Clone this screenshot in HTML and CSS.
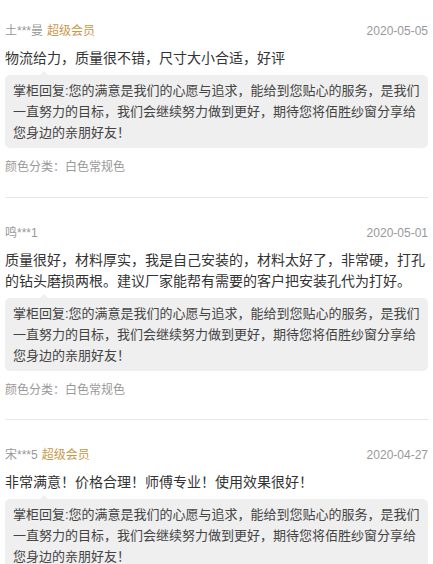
FILE: index.html
```html
<!DOCTYPE html>
<html lang="zh-CN">
  <head>
    <meta charset="UTF-8" />
    <meta name="viewport" content="width=device-width, initial-scale=1.0" />
    <title>商品评价</title>
    <link rel="stylesheet" href="styles.css">
  </head>
  <body>
    <div class="pingjia-lista">
      <div class="item">
        <div class="topo">
          <span class="nome">土***曼</span>
          <span class="vip">超级会员</span>
          <span class="data">2020-05-05</span>
        </div>
        <p class="texto">物流给力，质量很不错，尺寸大小合适，好评</p>
        <div class="resposta">掌柜回复:您的满意是我们的心愿与追求，能给到您贴心的服务，是我们一直努力的目标，我们会继续努力做到更好，期待您将佰胜纱窗分享给您身边的亲朋好友！</div>
        <p class="cor">颜色分类：白色常规色</p>
      </div>
      <div class="item">
        <div class="topo">
          <span class="nome">鸣***1</span>
          <span class="data">2020-05-01</span>
        </div>
        <p class="texto">质量很好，材料厚实，我是自己安装的，材料太好了，非常硬，打孔的钻头磨损两根。建议厂家能帮有需要的客户把安装孔代为打好。</p>
        <div class="resposta">掌柜回复:您的满意是我们的心愿与追求，能给到您贴心的服务，是我们一直努力的目标，我们会继续努力做到更好，期待您将佰胜纱窗分享给您身边的亲朋好友！</div>
        <p class="cor">颜色分类：白色常规色</p>
      </div>
      <div class="item">
        <div class="topo">
          <span class="nome">宋***5</span>
          <span class="vip">超级会员</span>
          <span class="data">2020-04-27</span>
        </div>
        <p class="texto">非常满意！价格合理！师傅专业！使用效果很好！</p>
        <div class="resposta">掌柜回复:您的满意是我们的心愿与追求，能给到您贴心的服务，是我们一直努力的目标，我们会继续努力做到更好，期待您将佰胜纱窗分享给您身边的亲朋好友！</div>
        <p class="cor">颜色分类：白色常规色</p>
      </div>
    </div>
  </body>
</html>
```

FILE: styles.css
```css
* {
  margin: 0;
  padding: 0;
  box-sizing: border-box;
}
body {
  background-color: #fff;
  font-family: "Liberation Sans", "Noto Sans CJK SC", sans-serif;
  color: #333;
}
.pingjia-lista {
  padding: 0 5px;
}
.item {
  padding: 26px 0 20px;
  border-bottom: 1px solid #e8e8e8;
}
.item:first-child {
  padding-top: 22px;
  padding-bottom: 21px;
}
.topo {
  display: flex;
  align-items: center;
  gap: 4px;
  height: 18px;
  font-size: 12px;
  line-height: 18px;
}
.nome {
  color: #999;
}
.vip {
  color: #c9974b;
}
.data {
  margin-left: auto;
  color: #999;
}
.texto {
  margin-top: 8px;
  font-size: 14px;
  line-height: 21px;
  color: #333;
}
.resposta {
  position: relative;
  margin-top: 6px;
  padding: 5px 6px 5px 8px;
  background-color: #efefef;
  border-radius: 5px;
  font-size: 13px;
  line-height: 21px;
  color: #444;
}
.resposta::before {
  content: "";
  position: absolute;
  top: -4px;
  left: 35px;
  border-left: 4px solid transparent;
  border-right: 4px solid transparent;
  border-bottom: 4px solid #efefef;
}
.cor {
  margin-top: 10px;
  font-size: 12px;
  line-height: 18px;
  color: #999;
}
```
